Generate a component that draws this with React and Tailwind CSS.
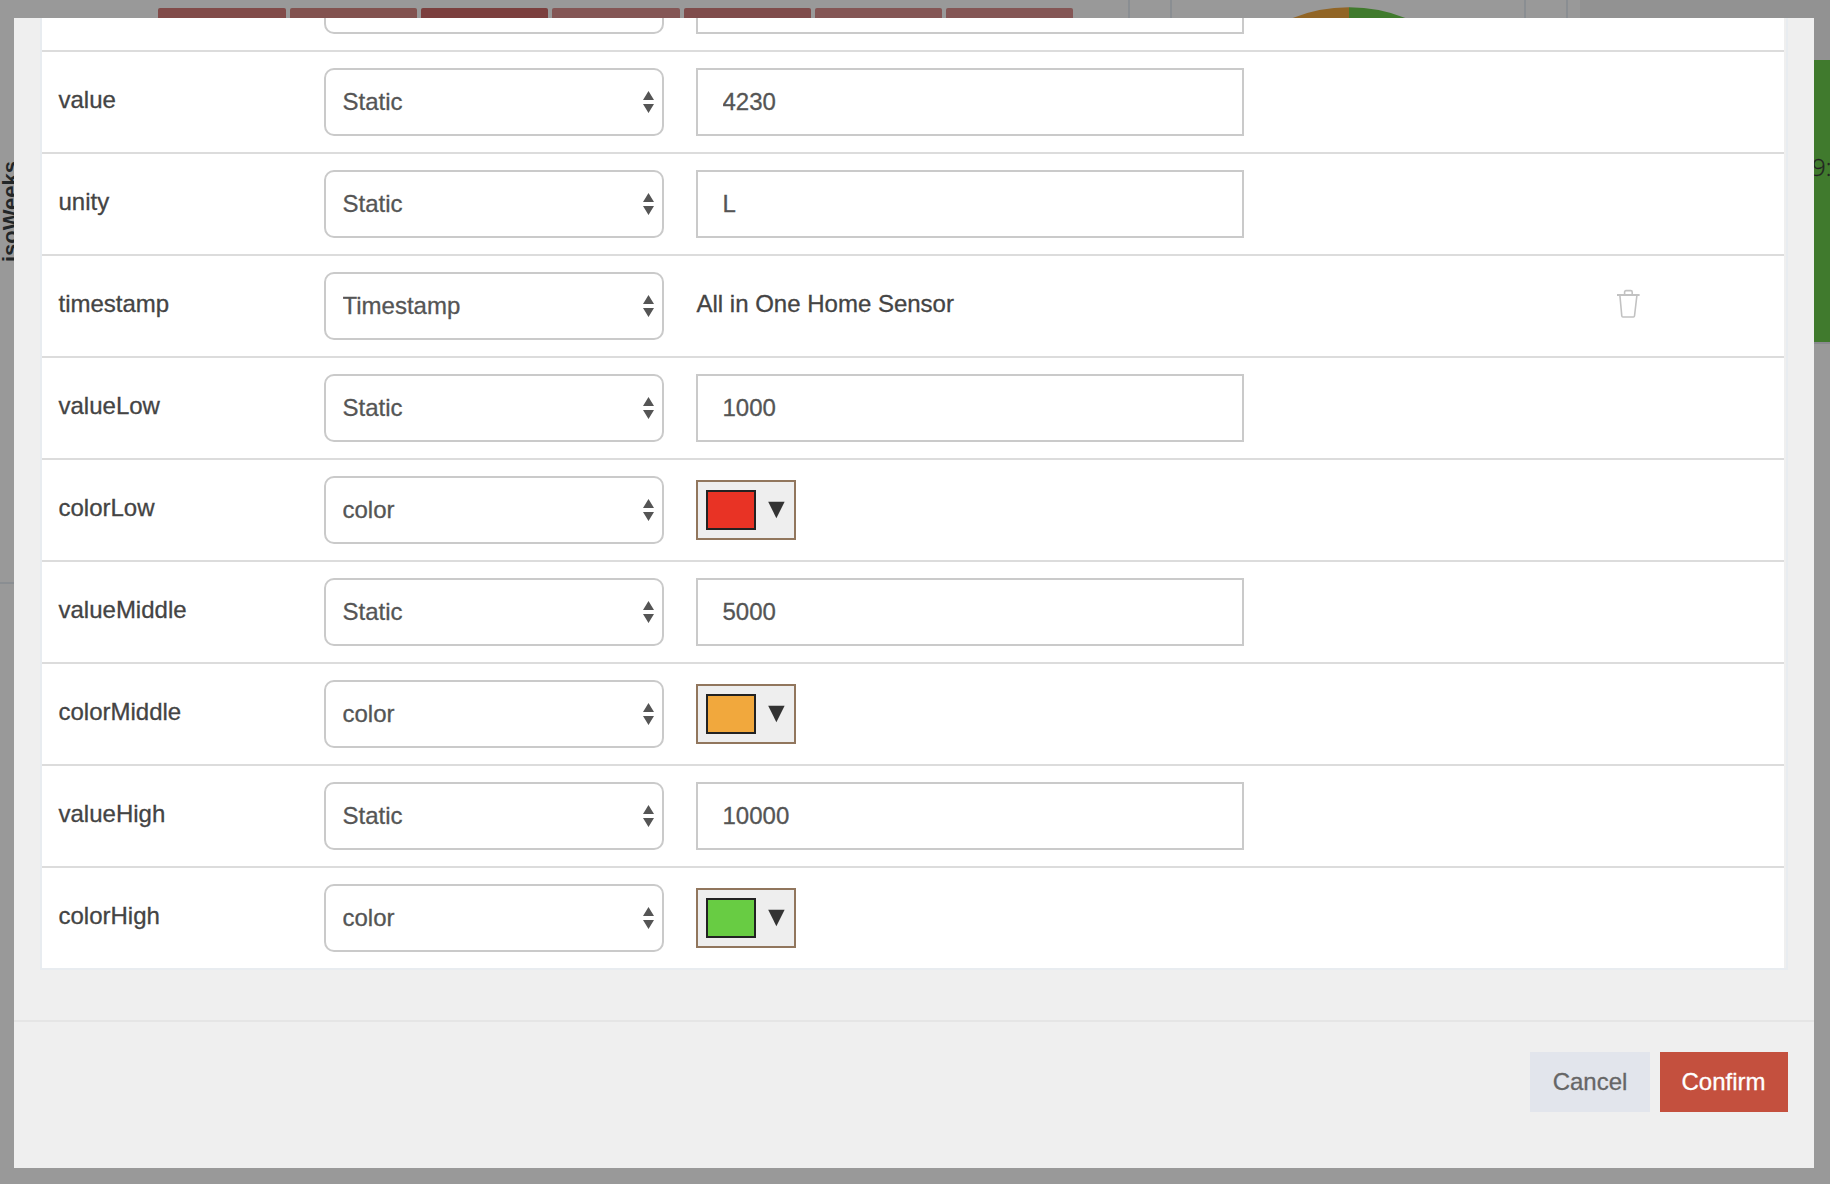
const rows = [
  { name: "", type: "Static", value: "" },
  { name: "value", type: "Static", value: "4230" },
  { name: "unity", type: "Static", value: "L" },
  { name: "timestamp", type: "Timestamp", sensor: "All in One Home Sensor" },
  { name: "valueLow", type: "Static", value: "1000" },
  { name: "colorLow", type: "color", swatch: "bg-[#e83325]" },
  { name: "valueMiddle", type: "Static", value: "5000" },
  { name: "colorMiddle", type: "color", swatch: "bg-[#f1a83d]" },
  { name: "valueHigh", type: "Static", value: "10000" },
  { name: "colorHigh", type: "color", swatch: "bg-[#68cc43]" },
];

const bars = [
  "bg-[#814b49]",
  "bg-[#82524f]",
  "bg-[#7b3f3e]",
  "bg-[#845655]",
  "bg-[#7f4c4b]",
  "bg-[#845655]",
  "bg-[#845655]",
];

function TrashIcon() {
  return (
    <svg width="24" height="30" viewBox="0 0 24 30" fill="none" stroke="#c2c2c2" strokeWidth="1.6">
      <path d="M1 6H23.6" strokeWidth="2" />
      <path d="M8.6 6V3Q8.6 1.6 10 1.6H14.8Q16.2 1.6 16.2 3V6" />
      <path d="M3.9 6.5L5.8 27Q5.9 28 6.9 28H17.4Q18.4 28 18.5 27L20.9 6.5" />
    </svg>
  );
}

function TypeSelect({ type }) {
  return (
    <div className="relative mt-4 h-[68px] w-[340px] shrink-0">
      <select
        defaultValue={type}
        className="block h-full w-full appearance-none rounded-[10px] border-2 border-[#cacaca] bg-white px-[16.5px] text-[24px] text-[#555] [-webkit-text-stroke:0.3px_#555]"
      >
        <option>{type}</option>
      </select>
      <svg className="absolute top-[23px] right-[10px]" width="11" height="22" viewBox="0 0 11 22" fill="#555">
        <path d="M0 9L5.5 0L11 9ZM0 13H11L5.5 22Z" />
      </svg>
    </div>
  );
}

function ColorButton({ swatch }) {
  return (
    <button className="mt-5 flex h-[60px] w-[100px] items-center border-2 border-[#91765d] bg-[#eee] pl-2">
      <span className={`h-10 w-[50px] border-2 border-[#222] ${swatch}`} />
      <svg className="ml-3" width="17" height="18" viewBox="0 0 17 18" fill="#333">
        <path d="M0.2 0.8H16.6L8.4 17.2Z" />
      </svg>
    </button>
  );
}

function Row({ row }) {
  return (
    <div className="flex h-[102px] items-start border-t-2 border-[#dcdcdc] pl-[16.5px]">
      <div className="mt-[34px] w-[265.5px] shrink-0 text-[#444] [-webkit-text-stroke:0.3px_#444]">{row.name}</div>
      <TypeSelect type={row.type} />
      <div className="ml-8 w-[548px] shrink-0">
        {row.sensor && (
          <div className="mt-[34px] pl-[0.5px] text-[#444] [-webkit-text-stroke:0.3px_#444]">{row.sensor}</div>
        )}
        {row.swatch && <ColorButton swatch={row.swatch} />}
        {row.value !== undefined && (
          <input
            defaultValue={row.value}
            className="mt-4 block h-[68px] w-full border-2 border-[#cacaca] bg-white px-[24.5px] text-[24px] text-[#555] [-webkit-text-stroke:0.3px_#555]"
          />
        )}
      </div>
      {row.sensor && (
        <button className="mt-[33px] ml-[372px]">
          <TrashIcon />
        </button>
      )}
    </div>
  );
}

function Backdrop() {
  return (
    <div className="flex h-full flex-col bg-[#999]">
      <div className="flex h-[18px] shrink-0">
        <div className="flex w-[1128px] shrink-0 gap-1 pt-2 pl-[158.4px]">
          {bars.map((color, i) => (
            <div key={i} className={`w-[127.3px] shrink-0 rounded-t-[2px] ${color}`} />
          ))}
        </div>
        <div className="w-[44px] shrink-0 border-x-2 border-[#8a8e92]" />
        <div className="w-[352px] shrink-0 pl-[22px]">
          <svg width="310" height="18" viewBox="0 0 310 18">
            <path d="M155 7.2A152 152 0 0 0 3 159.2H155Z" fill="#916526" />
            <path d="M155 7.2A152 152 0 0 1 307 159.2H155Z" fill="#407a2d" />
          </svg>
        </div>
        <div className="w-[44px] shrink-0 border-x-2 border-[#8a8e92]" />
        <div className="w-3 shrink-0" />
        <div className="flex-1 bg-[#929292]" />
      </div>
      <div className="flex flex-1 justify-between">
        <div className="w-[14px]">
          <div className="flex h-[566px] items-start justify-start border-b-2 border-[#8a8e92] pt-[143px]">
            <span className="-ml-[2px] block rotate-180 text-[22px] leading-[26px] font-bold whitespace-nowrap text-[#222628] [writing-mode:vertical-rl]">
              isoWeeks
            </span>
          </div>
        </div>
        <div className="w-4 overflow-hidden">
          <div className="h-[42px] bg-[#929292]" />
          <div className="flex h-[284px] justify-start border-b-2 border-[#8a8a90] bg-[#407a2d] pt-[91px] font-['Open_Sans'] text-[24px] leading-[32px] font-light text-[#222]">
            <span className="-ml-[2px] [-webkit-text-stroke:0.3px_#222]">9:</span>
          </div>
        </div>
      </div>
    </div>
  );
}

export default function App() {
  return (
    <div className="relative h-[1184px] w-[1830px] overflow-hidden font-['Liberation_Sans',Arial,sans-serif] text-[24px] leading-[28px]">
      <Backdrop />
      <div className="absolute top-[18px] left-[14px] flex h-[1150px] w-[1800px] flex-col overflow-hidden bg-[#efefef]">
        <div className="mx-[26px] -mt-[70px] shrink-0 border-2 border-t-0 border-[#e8ecf0] pr-[2px]">
          <div className="bg-white">
            {rows.map((row, i) => (
              <Row key={i} row={row} />
            ))}
          </div>
        </div>
        <div className="mt-[50px] flex justify-end gap-[10px] border-t-2 border-[#e5e5e5] pt-[30px] pr-[26px]">
          <button className="h-[60px] w-[120px] bg-[#e2e5ec] text-[#666] [-webkit-text-stroke:0.3px_#666]">Cancel</button>
          <button className="h-[60px] w-[128px] bg-[#c4503e] pr-[1px] text-white [-webkit-text-stroke:0.3px_#fff]">Confirm</button>
        </div>
      </div>
    </div>
  );
}
